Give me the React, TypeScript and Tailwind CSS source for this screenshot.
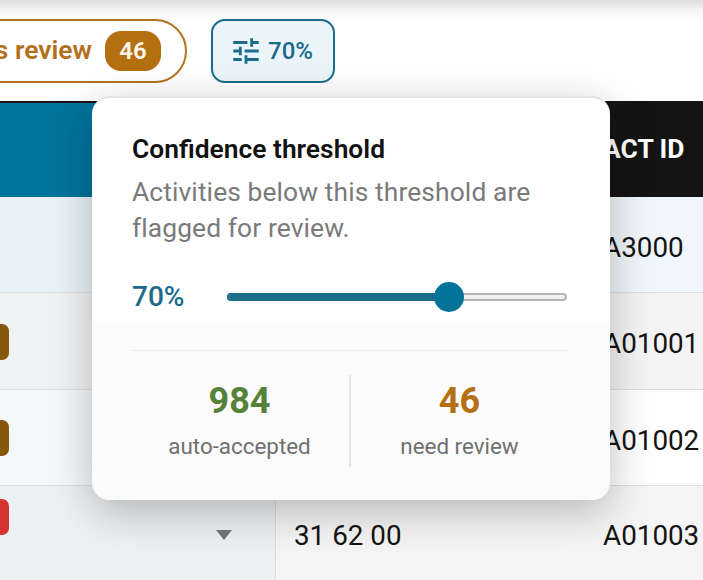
import { MdTune } from "react-icons/md";

const rows = [
  { left: "bg-[#e9f2f7]", right: "bg-[#f0f6fa]", pill: "", code: "", id: "A3000", caret: false, h: "h-[96px] border-b" },
  { left: "bg-[#f1f2f3]", right: "bg-[#f4f4f4]", pill: "mt-[1px] bg-[#87570b]", code: "", id: "A01001", caret: false, h: "h-[97px] border-b" },
  { left: "bg-[#f3f8fb]", right: "bg-white", pill: "mt-[1px] bg-[#87570b]", code: "", id: "A01002", caret: false, h: "h-[96px] border-b" },
  { left: "bg-[#eef1f3]", right: "bg-[#f5f5f5]", pill: "mt-[13px] self-start bg-[#d93232]", code: "31 62 00", id: "A01003", caret: true, h: "h-[94px]" },
];

export default function App() {
  return (
    <div className="relative h-[580px] w-[703px] overflow-hidden bg-white font-['Roboto',sans-serif]">
      <div className="flex h-[101px] items-center bg-[linear-gradient(to_bottom,#dedede_0px,#f4f4f4_10px,#ffffff_20px)] pt-[1px]">
        <div className="flex w-[187px] shrink-0 justify-end overflow-hidden">
          <div className="flex h-[64px] shrink-0 items-center gap-[13px] rounded-[32px] border-2 border-[#b0741e] bg-white pl-6 pr-[24px]">
            <span className="text-[26.4px] font-semibold text-[#b3701a]">Needs review</span>
            <span className="flex h-[40px] w-[56px] items-center justify-center rounded-[16px] bg-[#b36f10] text-[24px] font-semibold text-[#fdf6ea]">46</span>
          </div>
        </div>
        <div className="ml-6 flex h-[64px] w-[124px] items-center justify-center gap-[9px] rounded-[14px] border-2 border-[#1a6c8a] bg-[#ebf5f9] text-[#1a6c8a]">
          <MdTune className="-mx-1 h-[34px] w-[34px]" />
          <span className="text-[24px] font-medium">70%</span>
        </div>
      </div>

      <div className="flex h-[96px] border-t-2 border-[#141414] bg-[#141414] text-[26.4px] font-bold text-white">
        <div className="w-[276px] bg-[#00749c]" />
        <div className="flex flex-1 items-center pl-[327px]">ACT ID</div>
      </div>

      {rows.map((r) => (
        <div key={r.id} className={`flex ${r.h} border-[#dedede] ${r.right} text-[27.8px] text-[#141414]`}>
          <div className={`flex w-[276px] shrink-0 items-center justify-between border-r border-[#dcdcdc] pr-[43px] ${r.left}`}>
            {r.pill ? <span className={`h-[36px] w-[9px] rounded-r-[7px] ${r.pill}`} /> : <span />}
            {r.caret && (
              <svg width="16" height="10" viewBox="0 0 16 10" className="mt-[4px] text-[#757575]">
                <path d="M0 0h16L8 10z" fill="currentColor" />
              </svg>
            )}
          </div>
          <div className="mt-[6px] w-[327px] shrink-0 self-center pl-[18px]">{r.code}</div>
          <div className="mt-[6px] self-center">{r.id}</div>
        </div>
      ))}

      <div className="absolute left-[92px] top-[96px] h-[404px] w-[518px] rounded-[18px] border-t-2 border-[#e3e3e3] bg-[linear-gradient(to_bottom,#ffffff_0,#ffffff_55%,#fbfbfb_56%)] pl-[40px] pr-[42px] pt-[35px] shadow-[0_12px_44px_rgba(0,0,0,0.26)]">
        <div className="text-[26.4px] font-semibold leading-[32px] text-[#111111]">Confidence threshold</div>
        <div className="mt-[9px] text-[26.4px] leading-[36px] tracking-[0.1px] text-[#7a7a7a]">
          Activities below this threshold are flagged for review.
        </div>
        <div className="mt-[35px] flex h-[32px] items-center">
          <span className="w-[95px] text-[28px] font-medium text-[#1a6c8a]">70%</span>
          <div className="relative h-[8px] w-[340px] rounded-full border-2 border-[#b5b5b5] bg-[#f0f0f0]">
            <div className="h-full w-[220px] rounded-full bg-[#1a6c8a] outline-2 outline-[#1a6c8a]" />
            <div className="absolute left-[205px] top-[-13px] h-[30px] w-[30px] rounded-full bg-[#04739a]" />
          </div>
        </div>
        <div className="mt-[37px] flex border-t border-[#ececec] pt-[24px]">
          <div className="flex h-[92px] w-[219px] flex-col items-center border-r-2 border-[#e4e4e4] pr-[2px]">
            <span className="text-[36px] font-bold leading-[52px] text-[#558139]">984</span>
            <span className="mt-[3px] text-[22.4px] leading-[32px] text-[#707070]">auto-accepted</span>
          </div>
          <div className="flex h-[92px] flex-1 flex-col items-center">
            <span className="text-[36px] font-bold leading-[52px] text-[#b36f10]">46</span>
            <span className="mt-[3px] text-[22.4px] leading-[32px] text-[#707070]">need review</span>
          </div>
        </div>
      </div>
    </div>
  );
}
